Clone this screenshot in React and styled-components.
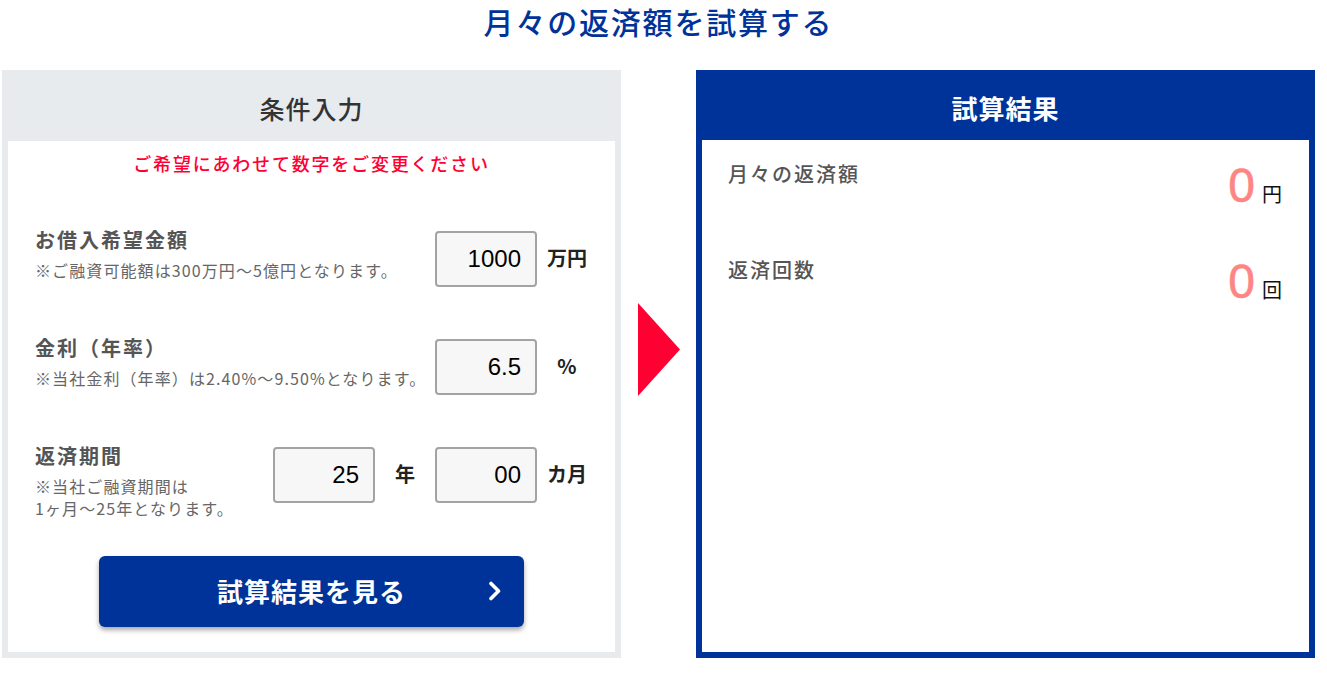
// Dependencies
import React from 'react';
import styled, { createGlobalStyle } from 'styled-components';

// Styles
const GlobalStyle = createGlobalStyle`
  html, body {
    margin: 0;
    padding: 0;
    background: #fff;
  }
  body {
    font-family: 'Noto Sans CJK JP', 'Noto Sans', sans-serif;
    color: #333;
  }
`;

const Page = styled.div`
  width: 1313px;
  margin-left: 2px;
`;

const Title = styled.h1`
  margin: 0 0 28px;
  padding-top: 1px;
  font-size: 30px;
  line-height: 41px;
  font-weight: 500;
  letter-spacing: 1.8px;
  text-align: center;
  color: #003399;
`;

const Columns = styled.div`
  display: flex;
  align-items: flex-start;
`;

const Panel = styled.section`
  width: 619px;
  height: 588px;
  box-sizing: border-box;
  display: flex;
  flex-direction: column;
  padding: 0 6px 6px;
  background: ${(props) => props.background};
`;

const PanelHeader = styled.h2`
  margin: 0;
  height: ${(props) => props.height}px;
  box-sizing: border-box;
  padding-top: ${(props) => props.offset}px;
  line-height: 65px;
  text-align: center;
  font-size: ${(props) => props.size}px;
  font-weight: ${(props) => props.weight};
  letter-spacing: 1px;
  color: ${(props) => props.color};
`;

const PanelBody = styled.div`
  flex: 1;
  background: #fff;
  padding: ${(props) => props.padding};
`;

const Notice = styled.p`
  margin: 0 0 57px;
  font-size: 18px;
  line-height: 22px;
  font-weight: 500;
  letter-spacing: 1.8px;
  text-align: center;
  color: #ff0033;
`;

const FieldRow = styled.div`
  display: flex;
  align-items: flex-start;
  padding: 0 18px 0 27px;
  margin-bottom: ${(props) => props.gap}px;
`;

const FieldText = styled.div`
  flex: 1;
`;

const FieldLabel = styled.div`
  font-size: 20px;
  line-height: 18px;
  font-weight: 700;
  letter-spacing: 2px;
  color: #555;
  margin-bottom: 10px;
`;

const FieldNote = styled.div`
  font-size: 16px;
  line-height: 22px;
  letter-spacing: 1.1px;
  color: #666;
`;

const Controls = styled.div`
  display: flex;
  align-items: center;
`;

const NumberInput = styled.input`
  width: 102px;
  height: 56px;
  box-sizing: border-box;
  border: 2px solid #a3a3a3;
  border-radius: 4px;
  background: #f7f7f7;
  padding: 0 14px 0 0;
  text-align: right;
  font-family: 'Liberation Sans', Arial, sans-serif;
  font-size: 24px;
  color: #000;
  outline: none;
`;

const Unit = styled.span`
  width: 60px;
  padding-bottom: 4px;
  text-align: center;
  font-size: 20px;
  font-weight: 700;
  color: #222;
`;

const SubmitButton = styled.button`
  position: relative;
  display: block;
  width: 425px;
  height: 71px;
  margin: 37px auto 0;
  padding: 0 0 3px;
  border: none;
  border-radius: 6px;
  background: #003399;
  box-shadow: 0 3px 5px rgba(0, 0, 0, 0.35);
  color: #fff;
  font-family: 'Noto Sans CJK JP', sans-serif;
  font-size: 26px;
  font-weight: 700;
  letter-spacing: 1px;
  cursor: pointer;
`;

const Chevron = styled.svg`
  position: absolute;
  right: 22px;
  top: 25px;
`;

const ArrowGap = styled.div`
  width: 75px;
  padding: 233px 0 0 17px;
  box-sizing: border-box;
`;

const ResultRow = styled.div`
  display: flex;
  justify-content: space-between;
  align-items: flex-start;
  height: ${(props) => props.height}px;
`;

const ResultLabel = styled.div`
  font-size: 20px;
  line-height: 28px;
  font-weight: 500;
  letter-spacing: 2px;
  color: #555;
`;

const ResultValue = styled.div`
  display: flex;
  align-items: baseline;
  margin-top: 2px;
`;

const BigNumber = styled.span`
  font-family: 'Liberation Sans', Arial, sans-serif;
  font-size: 48px;
  line-height: 48px;
  color: #ff8585;
  -webkit-text-stroke: 0.6px #ff8585;
`;

const SmallUnit = styled.span`
  margin-left: 7px;
  font-size: 20px;
  color: #111;
`;

const fields = [
  {
    label: 'お借入希望金額',
    note: ['※ご融資可能額は300万円〜5億円となります。'],
    inputs: [{ value: '1000', unit: '万円' }],
  },
  {
    label: '金利（年率）',
    note: ['※当社金利（年率）は2.40%〜9.50%となります。'],
    inputs: [{ value: '6.5', unit: '%' }],
  },
  {
    label: '返済期間',
    note: ['※当社ご融資期間は', '1ヶ月〜25年となります。'],
    inputs: [
      { value: '25', unit: '年' },
      { value: '00', unit: 'カ月' },
    ],
  },
];

const App = () => {
  return (
    <Page>
      <GlobalStyle />
      <Title>月々の返済額を試算する</Title>
      <Columns>
        <Panel background='#e8ebee'>
          <PanelHeader height={71} offset={6} size={25} weight={500} color='#333'>
            条件入力
          </PanelHeader>
          <PanelBody padding='11px 0 25px'>
            <Notice>ご希望にあわせて数字をご変更ください</Notice>
            {fields.map((field, i) => (
              <FieldRow key={field.label} gap={i < fields.length - 1 ? 52 : 0}>
                <FieldText>
                  <FieldLabel>{field.label}</FieldLabel>
                  <FieldNote>
                    {field.note.map((line, j) => (
                      <div key={j}>{line}</div>
                    ))}
                  </FieldNote>
                </FieldText>
                <Controls>
                  {field.inputs.map((input) => (
                    <React.Fragment key={input.unit}>
                      <NumberInput type='text' defaultValue={input.value} />
                      <Unit>{input.unit}</Unit>
                    </React.Fragment>
                  ))}
                </Controls>
              </FieldRow>
            ))}
            <SubmitButton type='button'>
              試算結果を見る
              <Chevron width='14' height='20' viewBox='0 0 14 20'>
                <polyline
                  points='3,2.5 10.5,10 3,17.5'
                  fill='none'
                  stroke='#fff'
                  strokeWidth='3.6'
                  strokeLinecap='round'
                  strokeLinejoin='round'
                />
              </Chevron>
            </SubmitButton>
          </PanelBody>
        </Panel>

        <ArrowGap>
          <svg width='42' height='93' viewBox='0 0 42 93'>
            <polygon points='0,0 42,46.5 0,93' fill='#ff0033' />
          </svg>
        </ArrowGap>

        <Panel background='#003399'>
          <PanelHeader height={70} offset={5} size={26} weight={700} color='#fff'>
            試算結果
          </PanelHeader>
          <PanelBody padding='20px 27px 0 26px'>
            <ResultRow height={96}>
              <ResultLabel>月々の返済額</ResultLabel>
              <ResultValue>
                <BigNumber>0</BigNumber>
                <SmallUnit>円</SmallUnit>
              </ResultValue>
            </ResultRow>
            <ResultRow height={96}>
              <ResultLabel>返済回数</ResultLabel>
              <ResultValue>
                <BigNumber>0</BigNumber>
                <SmallUnit>回</SmallUnit>
              </ResultValue>
            </ResultRow>
          </PanelBody>
        </Panel>
      </Columns>
    </Page>
  );
};

export default App;
